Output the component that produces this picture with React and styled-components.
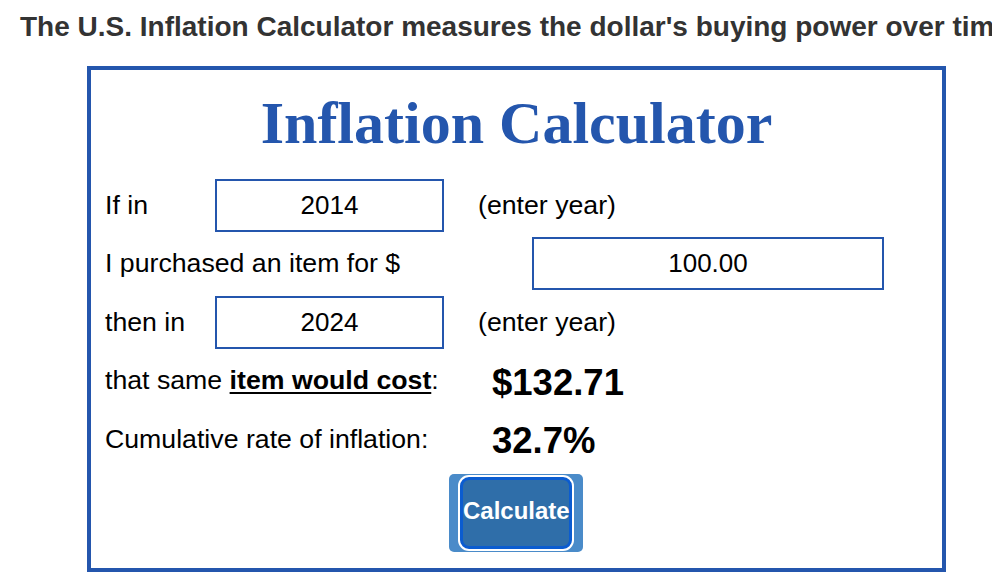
import styled, { createGlobalStyle } from "styled-components";

const GlobalStyle = createGlobalStyle`
  html, body {
    margin: 0;
    padding: 0;
    background: #fff;
    font-family: "Liberation Sans", Arial, sans-serif;
  }
`;

const Page = styled.div`
  width: 992px;
  height: 572px;
  overflow: hidden;
`;

const Intro = styled.h2`
  margin: 0;
  padding: 11px 0 0 20px;
  height: 32px;
  line-height: 32px;
  font-size: 28px;
  font-weight: bold;
  color: #333;
  white-space: nowrap;
  overflow: hidden;
`;

const Box = styled.div`
  box-sizing: border-box;
  width: 859px;
  height: 506px;
  margin: 23px 0 0 87px;
  border: 4px solid #2456ad;
  padding: 0 14px 0 14px;
`;

const Title = styled.h1`
  margin: 23px 0 0 0;
  height: 60px;
  line-height: 60px;
  text-align: center;
  font-family: "Liberation Serif", "Times New Roman", serif;
  font-size: 60px;
  font-weight: bold;
  color: #2456ad;
`;

const Rows = styled.div`
  margin-top: 23px;
  display: flex;
  flex-direction: column;
`;

const Row = styled.div`
  display: flex;
  align-items: center;
  height: 58.5px;
  font-size: 26.7px;
  color: #000;
`;

const Label = styled.div`
  flex: none;
  width: ${p => p.$w}px;
  white-space: nowrap;
`;

const Field = styled.input`
  box-sizing: border-box;
  flex: none;
  width: ${p => p.$w}px;
  height: 53px;
  border: 2px solid #2456ad;
  border-radius: 0;
  background: #fff;
  text-align: center;
  font-family: "Liberation Sans", Arial, sans-serif;
  font-size: 26px;
  color: #000;
  padding: 0;
  outline: none;
`;

const Note = styled.span`
  margin-left: 34px;
`;

const Strong = styled.span`
  font-weight: bold;
  text-decoration: underline;
  text-decoration-thickness: 2px;
  text-underline-offset: 3px;
`;

const Result = styled.span`
  font-size: 36.5px;
  font-weight: bold;
  position: relative;
  top: 2px;
`;

const ButtonRow = styled.div`
  margin-top: 5px;
  padding-left: 344px;
`;

const ButtonFrame = styled.div`
  display: inline-flex;
  align-items: center;
  justify-content: center;
  box-sizing: border-box;
  width: 134px;
  height: 78px;
  background: #4a8bc9;
  border-radius: 5px;
`;

const CalcButton = styled.button`
  box-sizing: border-box;
  width: 112px;
  height: 72px;
  border: 3px solid #0b5cd0;
  border-radius: 9px;
  background: #2f6ea9;
  box-shadow: 0 0 0 2px #fff;
  color: #fff;
  font-family: "Liberation Sans", Arial, sans-serif;
  font-size: 24px;
  font-weight: bold;
  padding: 0 0 4px 0;
  cursor: pointer;
`;

export default function App() {
  return (
    <Page>
      <GlobalStyle />
      <Intro>The U.S. Inflation Calculator measures the dollar's buying power over time.</Intro>
      <Box>
        <Title>Inflation Calculator</Title>
        <Rows>
          <Row>
            <Label $w={110}>If in</Label>
            <Field $w={229} defaultValue="2014" />
            <Note>(enter year)</Note>
          </Row>
          <Row>
            <Label $w={427}>I purchased an item for $</Label>
            <Field $w={352} defaultValue="100.00" />
          </Row>
          <Row>
            <Label $w={110}>then in</Label>
            <Field $w={229} defaultValue="2024" />
            <Note>(enter year)</Note>
          </Row>
          <Row>
            <Label $w={387}>
              that same <Strong>item would cost</Strong>:
            </Label>
            <Result>$132.71</Result>
          </Row>
          <Row>
            <Label $w={387}>Cumulative rate of inflation:</Label>
            <Result>32.7%</Result>
          </Row>
        </Rows>
        <ButtonRow>
          <ButtonFrame>
            <CalcButton>Calculate</CalcButton>
          </ButtonFrame>
        </ButtonRow>
      </Box>
    </Page>
  );
}
